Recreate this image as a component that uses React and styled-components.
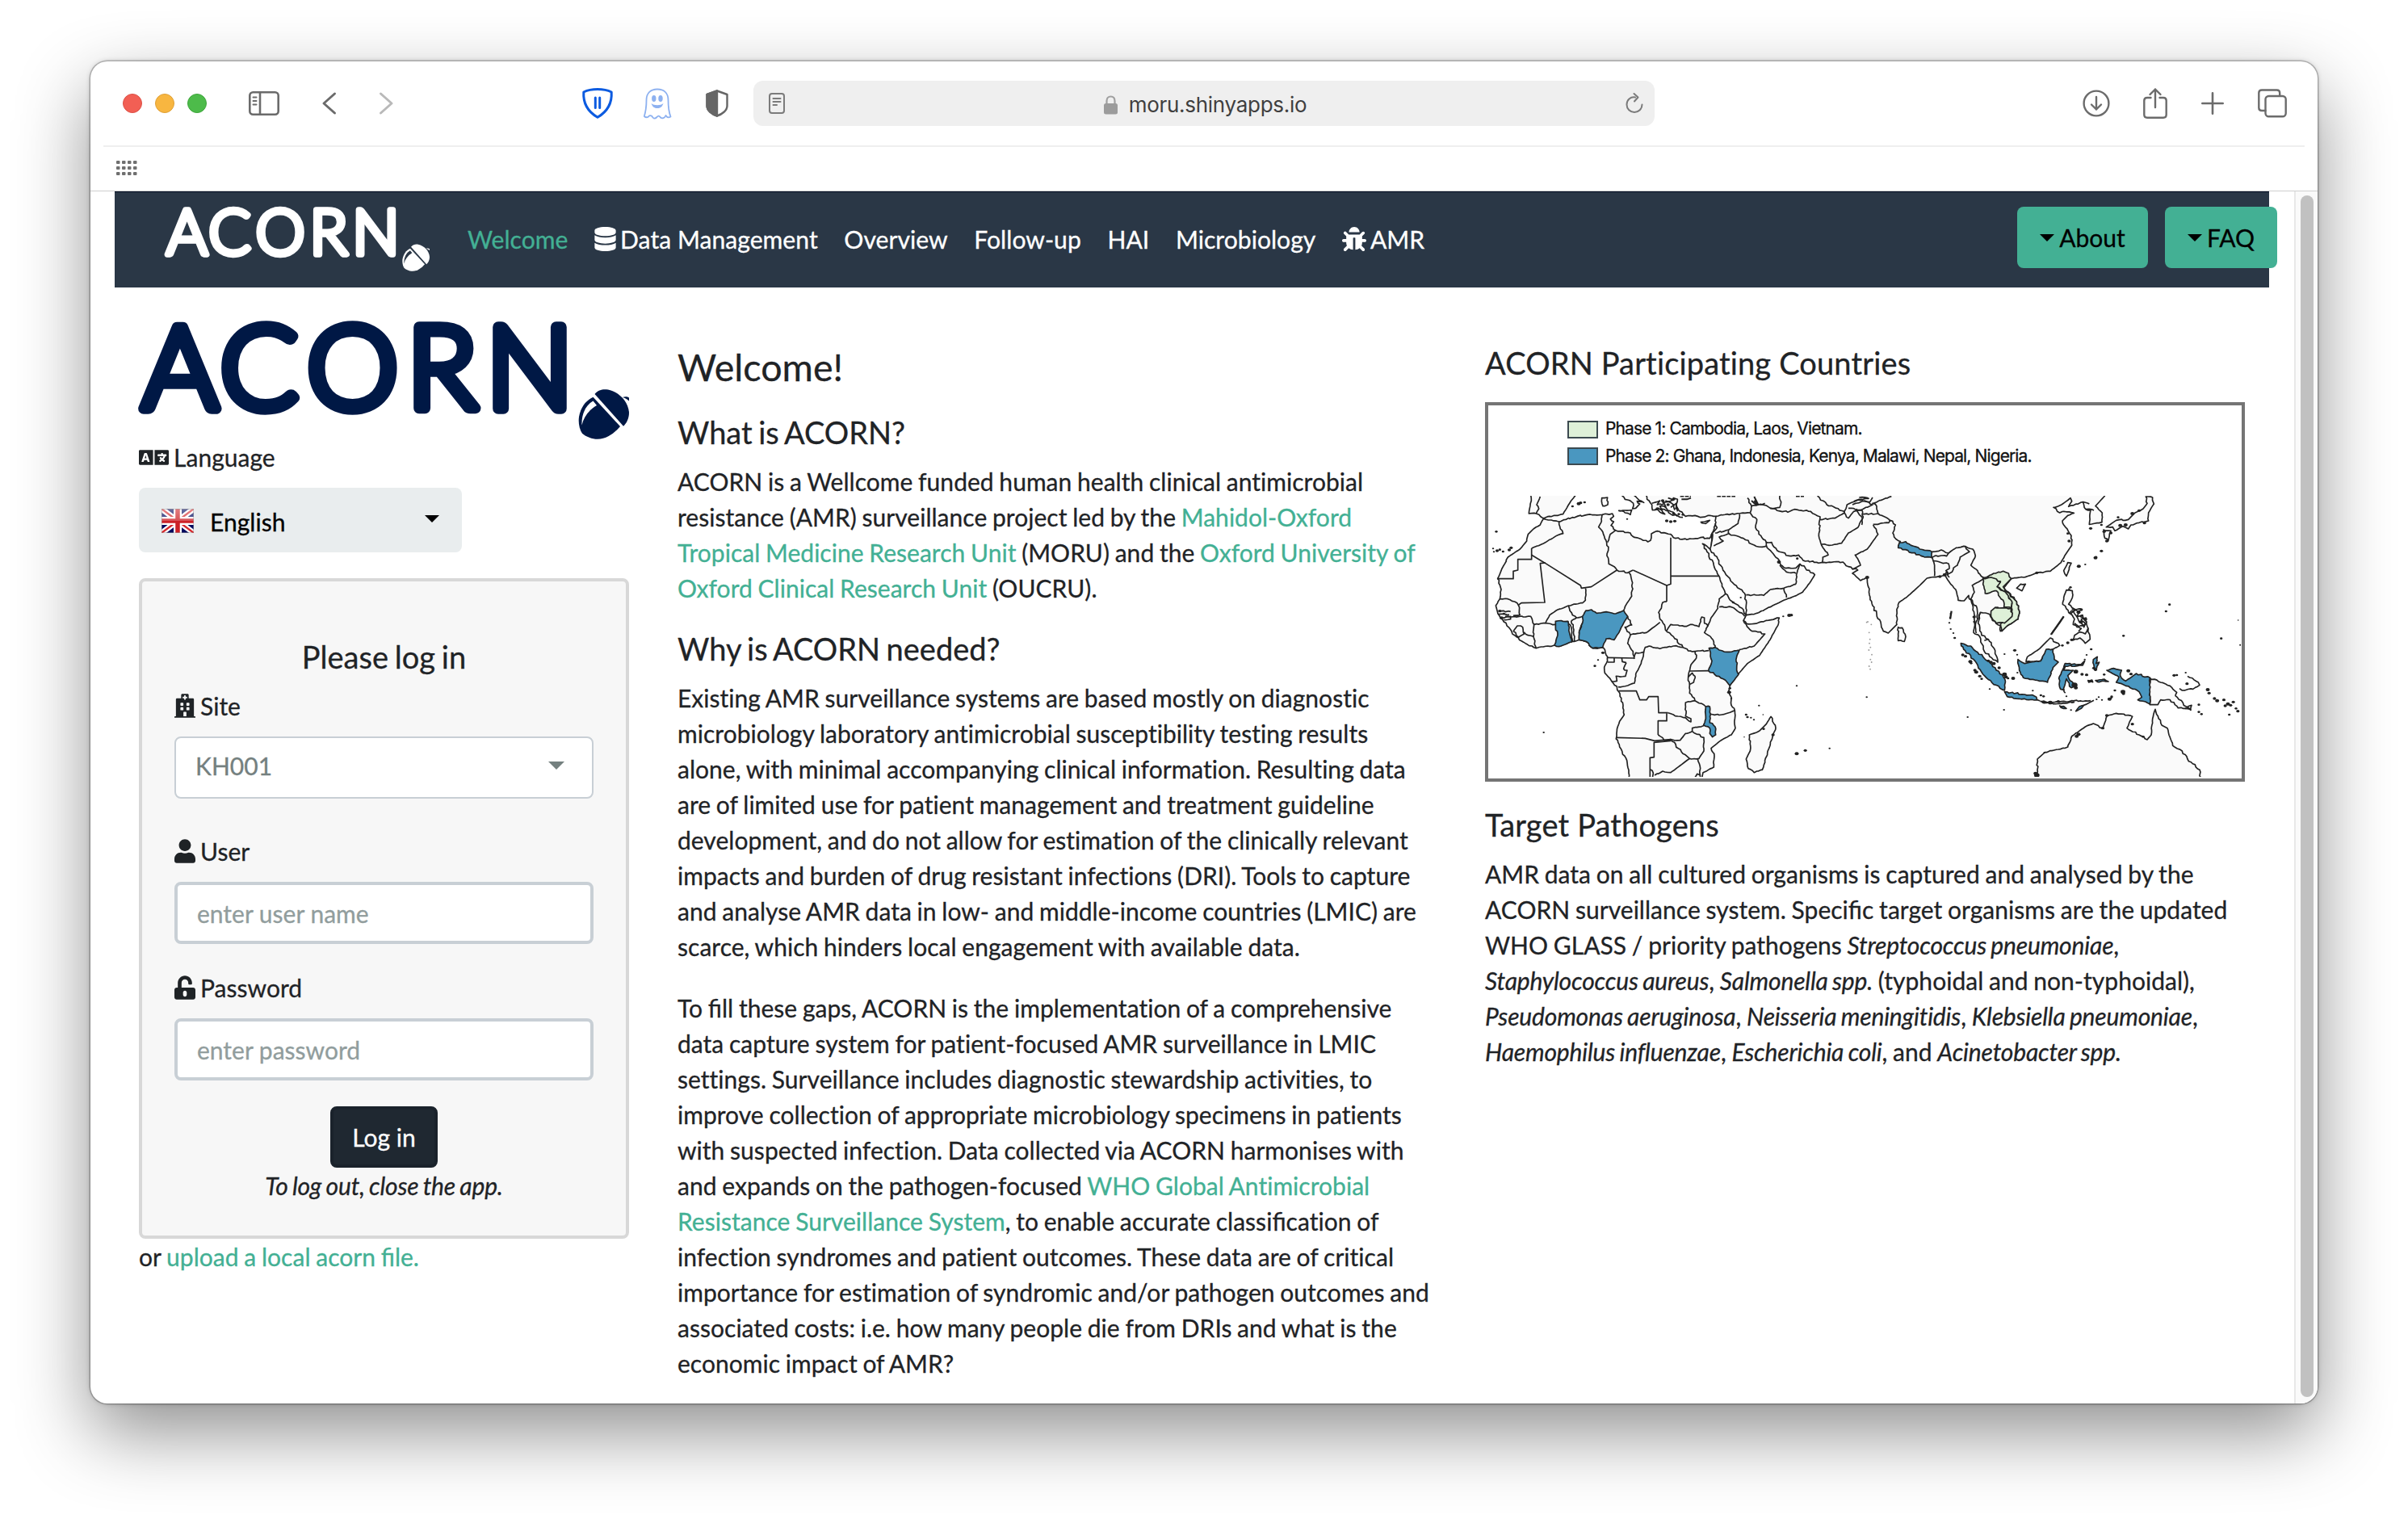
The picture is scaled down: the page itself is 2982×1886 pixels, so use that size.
import React from "react";
import styled, { createGlobalStyle } from "styled-components";
import { FaDatabase, FaBug, FaLanguage, FaHospital, FaUser, FaUnlockAlt } from "react-icons/fa";

const ink = "#1f2326";
const green = "#43b094";
const navy = "#2a3746";
const logoBlue = "#001845";
const chromeGrey = "#6b6b6b";

const Global = createGlobalStyle`
  *, *::before, *::after { box-sizing: border-box; }
  body { margin: 0; background: #fff; }
`;

const Desktop = styled.div`
  width: 2982px;
  height: 1886px;
  padding: 76px 112px 0;
  overflow: hidden;
  background: #fff;
  font-family: Lato, "Liberation Sans", sans-serif;
  font-size: 30px;
  line-height: 44px;
  color: ${ink};
`;

const Window = styled.div`
  width: 2758px;
  height: 1662px;
  display: flex;
  flex-direction: column;
  border-radius: 21px;
  overflow: hidden;
  background: #fff;
  box-shadow: 0 0 0 1.5px rgba(0, 0, 0, 0.22), 0 0 6px rgba(0, 0, 0, 0.2), 0 36px 90px rgba(0, 0, 0, 0.44);
`;

/* ---------- browser chrome ---------- */

const Toolbar = styled.div`
  height: 106px;
  margin: 0 16px;
  padding: 0 22px 0 24px;
  display: flex;
  align-items: center;
  border-bottom: 2px solid #efefef;
  svg { display: block; flex: none; overflow: visible; }
`;

const Lights = styled.div`
  display: flex;
  gap: 16px;
`;

const Light = styled.span`
  width: 24px;
  height: 24px;
  border-radius: 50%;
  background: ${(p) => p.$fill};
  border: 1px solid ${(p) => p.$edge};
`;

const Spacer = styled.span`
  flex: none;
  width: ${(p) => p.$w}px;
`;

const AddressBar = styled.div`
  width: 1116px;
  height: 56px;
  padding: 0 14px 0 19px;
  display: flex;
  align-items: center;
  justify-content: space-between;
  border-radius: 12px;
  background: #efefef;
`;

const Address = styled.span`
  display: flex;
  align-items: center;
  gap: 14px;
  padding-top: 4px;
  font: 400 26px/32px Inter, "Liberation Sans", sans-serif;
  letter-spacing: -0.28px;
  color: #3f3f3f;
`;

const RightTools = styled.div`
  margin-left: auto;
  display: flex;
  align-items: center;
`;

const Favorites = styled.div`
  height: 55px;
  padding: 0 0 2px 32px;
  display: flex;
  align-items: center;
  border-bottom: 1px solid #cfcfcf;
`;

/* ---------- page ---------- */

const Viewport = styled.div`
  flex: 1;
  min-height: 0;
  display: flex;
`;

const Page = styled.div`
  width: 2729px;
  padding-left: 30px;
  font-variant-ligatures: none;
  word-spacing: -1px;
  letter-spacing: 0.03px;
  -webkit-text-stroke: 0.3px currentColor;
`;

const ScrollTrack = styled.div`
  width: 29px;
  padding: 5px 0 0 6px;
  border-left: 2px solid #e8e8e8;
  background: #fafafa;
`;

const Thumb = styled.div`
  width: 16px;
  height: 1488px;
  border-radius: 8px;
  background: #c1c1c1;
`;

const Navbar = styled.nav`
  width: 2668px;
  height: 119px;
  padding: 18px 0 0 62px;
  display: flex;
  align-items: flex-start;
  background: ${navy};
  border-top: 1px solid #000b20;
  svg { display: block; }
`;

const NavList = styled.div`
  display: flex;
  gap: 32.6px;
  margin: 18px 0 0 47px;
  font-size: 30.1px;
  word-spacing: 0;
`;

const NavItem = styled.a`
  display: flex;
  align-items: center;
  gap: 5px;
  white-space: nowrap;
  color: ${(p) => (p.$active ? green : "#fff")};
`;

const NavButtons = styled.div`
  display: flex;
  gap: 21px;
  margin: 0 -10px 0 auto;
`;

const MenuButton = styled.button`
  height: 76px;
  width: ${(p) => p.$w}px;
  padding: 0;
  display: flex;
  align-items: center;
  justify-content: center;
  gap: 6px;
  border: 0;
  border-radius: 8px;
  background: ${green};
  color: #000;
  font: inherit;
`;

const Caret = styled.span`
  flex: none;
  width: 0;
  height: 0;
  border: ${(p) => p.$s || 9.5}px solid transparent;
  border-top-color: ${(p) => p.$color || "#000"};
  border-bottom: 0;
`;

const Columns = styled.div`
  display: grid;
  grid-template-columns: 607px 940px 941px;
  column-gap: 60px;
  padding-left: 30px;
`;

const Side = styled.aside`
  padding-top: 40px;
  > svg { display: block; }
`;

const Label = styled.div`
  height: 44px;
  display: flex;
  align-items: center;
  gap: 6px;
  margin-bottom: 16px;
`;

const LanguageSelect = styled.div`
  width: 400px;
  height: 80px;
  margin-bottom: 32px;
  padding: 1px 28px 0 28px;
  display: flex;
  align-items: center;
  border-radius: 8px;
  background: #e9edee;
  color: #000;
  > span:nth-child(2) { flex: 1; margin-left: 20px; padding-top: 3px; }
  > span:last-child { margin-top: -4px; }
`;

const LoginPanel = styled.section`
  height: 818px;
  padding: 71px 40px 0;
  border: 4px solid #d8d8d8;
  border-radius: 8px;
  background: #f7f7f7;
`;

const LoginTitle = styled.h4`
  margin: 0 0 17px;
  font-weight: 400;
  font-size: 38px;
  line-height: 44px;
  text-align: center;
  word-spacing: -2px;
`;

const SiteSelect = styled.div`
  height: 77px;
  margin-bottom: 43px;
  padding: 0 34px 6px 24px;
  display: flex;
  align-items: center;
  justify-content: space-between;
  border: 2px solid #c8cfd5;
  border-radius: 8px;
  background: #fff;
  color: #74807f;
`;

const Input = styled.input`
  display: block;
  width: 100%;
  height: 77px;
  margin: 0 0 32px;
  padding: 0 24px;
  border: 4px solid #c8cfd5;
  border-radius: 8px;
  background: #fff;
  font: inherit;
  &::placeholder { color: #919d9d; opacity: 1; }
`;

const LoginButton = styled.button`
  display: block;
  width: 133px;
  height: 76px;
  margin: 0 auto;
  padding: 0;
  border: 4px solid #1a222b;
  border-radius: 8px;
  background: #1f2831;
  color: #fff;
  font: inherit;
`;

const Italic = styled.em`
  letter-spacing: -0.17px;
  word-spacing: -1.5px;
`;

const LogoutHint = styled.div`
  text-align: center;
`;

const Link = styled.a`
  color: ${green};
`;

const Joined = styled.span`
  font-variant-ligatures: common-ligatures;
  letter-spacing: 0;
`;

const Article = styled.main`
  padding-top: 70px;
  white-space: nowrap;
`;

const PageTitle = styled.h2`
  margin: 0 0 31px;
  font-weight: 400;
  font-size: 46.6px;
  line-height: 56px;
`;

const Heading = styled.h3`
  margin: 0 0 ${(p) => p.$mb || 17}px;
  font-weight: 400;
  font-size: 38px;
  line-height: 44px;
  white-space: nowrap;
  letter-spacing: ${(p) => (p.$wide ? 0.15 : 0)}px;
  word-spacing: ${(p) => (p.$wide ? 0 : -2.2)}px;
`;

const Para = styled.p`
  margin: 0 0 ${(p) => p.$mb || 32}px;
`;

const Aside = styled.section`
  padding-top: 71px;
  white-space: nowrap;
`;

const MapFrame = styled.figure`
  width: 941px;
  height: 470px;
  margin: 0 0 31px;
  border: 4px solid #757575;
  background: #fff;
  display: flex;
  flex-direction: column;
  > svg { display: block; }
`;

const Legend = styled.figcaption`
  height: 106px;
  padding: 12px 0 0 98px;
  display: flex;
  flex-direction: column;
`;

const LegendRow = styled.div`
  display: flex;
  align-items: center;
  gap: 9px;
  height: 33.5px;
  font: 400 21px/33px Inter, "Liberation Sans", sans-serif;
  letter-spacing: -0.88px;
  word-spacing: 0;
  color: #111;
`;

const Swatch = styled.span`
  width: 38px;
  height: 22px;
  margin-top: 2px;
  border: 2px solid #3c4a50;
  background: ${(p) => p.$fill};
`;

/* ---------- drawings ---------- */

const LogoSvg = styled.svg`
  overflow: visible;
  letter-spacing: 0;
`;

function Logo({ width, color, back }) {
  return (
    <LogoSvg width={width} height={(width * 148) / 607} viewBox="172 396 607 148" role="img" aria-label="ACORN">
      <g fill={color} stroke={color} strokeWidth="13.5" strokeLinejoin="round" fontFamily="Lato, sans-serif" fontWeight="300" fontSize="143">
        <text x="176 272.5 380 504 602" y="505.500">ACORN</text>
      </g>
      <g fill={color}>
        <path d="M736.5 488C741 482.5 747 481.5 753 482.500C766 485 778 497 779 511C779 518 776 524 772 527.700Z" />
        <path d="M734.500 491.700L768 528C761 536 752 543.700 740 543.700C733 543.700 726 541 721 536.700C717.500 532 716 524 717 516C719 505 725 496 734.500 491.700Z" />
        <path d="M771 492C774 490.800 777 491 779 492.500V496.500C776.500 494 774 493 771 492Z" />
      </g>
      <path d="M734.500 496.500L739 502C729 508 723 516 720.500 526.500C720 513 725 502 734.500 496.500Z" fill={back} />
    </LogoSvg>
  );
}

function Flag() {
  return (
    <svg width="40" height="30" viewBox="0 0 40 30">
      <defs>
        <linearGradient id="gloss" x1="0" y1="0" x2="0" y2="1">
          <stop offset="0" stopColor="#fff" stopOpacity=".42" />
          <stop offset=".5" stopColor="#fff" stopOpacity=".22" />
          <stop offset=".5" stopColor="#fff" stopOpacity="0" />
        </linearGradient>
      </defs>
      <path d="M0 0H40V30H0Z" fill="#00085e" />
      <path d="M0 0L40 30M40 0L0 30" stroke="#fff" strokeWidth="7" />
      <path d="M0 0L40 30M40 0L0 30" stroke="#d42a2e" strokeWidth="2.400" />
      <path d="M20 0V30M0 15H40" stroke="#fff" strokeWidth="10" />
      <path d="M20 0V30M0 15H40" stroke="#cc2127" strokeWidth="5.500" />
      <path d="M0 0H40V30H0Z" fill="url(#gloss)" />
      <path d="M.5 .5H39.500V29.500H.5Z" fill="none" stroke="#999" strokeOpacity=".5" />
    </svg>
  );
}

const land = {
  africa: "217,127 235,132 275,138 325,122 380,112 435,112 473,108 478,118 466,128 478,138 468,152 485,170 540,180 548,192 605,213 615,208 618,183 640,173 690,185 700,197 750,205 800,197 835,200 845,178 838,242 808,220 825,250 850,300 868,338 885,385 905,420 925,440 960,465 970,485 960,505 972,517 1000,517 1045,505 1093,495 1090,518 1060,575 1020,635 975,665 940,705 910,745 905,770 915,790 915,820 928,840 930,905 915,930 870,955 840,980 852,1010 850,1050 810,1070 805,1100 538,1100 527,1025 500,975 487,945 490,915 500,880 517,855 513,820 497,770 490,750 470,730 445,700 443,680 455,655 455,640 440,607 400,608 385,590 350,577 325,583 275,600 258,597 190,608 150,590 110,560 70,510 48,480 40,450 55,425 60,390 47,350 60,320 85,270 130,240 155,210 160,185 180,165 205,150",
  madagascar: "1062,862 1080,905 1070,930 1055,980 1030,1060 1000,1070 978,1055 970,1020 985,990 982,930 1020,915 1045,890",
  iberia: "170,30 172,60 163,108 190,108 215,125 240,118 290,110 305,85 320,60 345,30",
  sardinia: "434,50 455,48 456,75 438,80",
  italy: "500,30 520,55 545,65 552,78 548,90 560,88 575,72 565,62 590,67 560,45 550,30",
  sicily: "497,97 520,96 545,95 540,112 520,105",
  greece: "598,30 602,55 620,75 622,95 640,92 650,103 668,110 655,92 650,80 672,84 660,65 690,62 700,50 715,55 712,80 722,98 745,118 780,115 800,122 835,115 858,118 855,150 845,180 838,245 850,255 875,300 895,335 920,365 965,405 970,450 972,485 1010,478 1060,455 1110,430 1150,415 1180,400 1210,360 1225,335 1190,310 1170,295 1155,310 1110,308 1098,298 1088,275 1060,245 1045,228 1045,215 1065,215 1085,245 1130,265 1165,262 1190,285 1250,290 1330,288 1350,305 1385,318 1365,330 1395,357 1418,345 1424,380 1428,410 1440,450 1455,480 1480,545 1498,552 1530,520 1530,470 1538,438 1565,420 1615,375 1642,348 1710,338 1730,370 1752,400 1758,430 1780,432 1797,412 1808,440 1820,490 1815,550 1838,565 1855,620 1905,660 1892,610 1870,575 1845,560 1832,515 1840,475 1875,482 1885,505 1915,525 1915,545 1940,525 1980,500 1985,470 1975,435 1945,400 1928,383 1955,350 2000,345 2045,330 2100,322 2140,290 2160,255 2180,225 2178,190 2150,150 2145,135 2165,115 2188,106 2150,100 2135,105 2112,85 2140,76 2160,62 2175,50 2180,62 2168,82 2222,65 2232,92 2250,95 2245,148 2292,140 2293,105 2268,80 2300,45 2310,30",
  srilanka: "1535,530 1550,532 1563,565 1558,583 1535,580",
  hainan: "1975,385 1990,370 2008,370 1995,395",
  taiwan: "2150,320 2165,290 2178,292 2160,340",
  japan: "2455,45 2480,48 2485,72 2465,105 2465,135 2430,142 2400,150 2390,165 2370,155 2340,172 2332,158 2308,158 2345,133 2390,130 2415,105 2445,90 2460,70",
  kyushu: "2298,168 2325,172 2315,210 2300,190",
  luzon: "2160,392 2182,395 2182,420 2168,445 2195,465 2175,480 2160,462 2146,445 2150,420",
  mindanao: "2210,548 2230,555 2240,535 2248,575 2230,590 2210,570 2185,578 2190,560",
  sabah: "2010,658 2015,640 2060,610 2100,570 2135,598 2110,612 2085,620 2065,655",
  png: "2470,718 2510,735 2545,748 2570,772 2565,785 2605,825 2620,835 2575,830 2545,800 2510,800 2500,818 2470,818",
  australia: "2045,1100 2052,1060 2052,1020 2080,995 2165,975 2180,935 2230,900 2260,888 2295,905 2310,860 2345,850 2405,862 2385,905 2430,930 2460,948 2475,930 2480,870 2490,835 2500,860 2515,895 2535,905 2555,970 2590,990 2610,1020 2655,1060 2658,1100",
};

const phaseTwo = [
  "362,490 375,468 395,465 415,478 450,473 480,480 515,468 530,490 515,515 500,545 480,577 450,573 437,605 400,608 385,590 350,577 350,545 362,515",
  "262,508 308,508 313,530 316,560 322,585 275,602 258,597 270,555 262,530",
  "832,608 855,605 870,615 900,622 945,615 935,640 935,690 942,705 910,747 885,722 830,692 843,655",
  "820,825 835,825 838,853 835,885 855,900 857,930 845,938 835,925 835,905 812,893 820,870",
  "1540,215 1563,212 1615,240 1660,250 1660,272 1620,265 1535,235",
  "1768,590 1805,600 1850,640 1895,680 1932,725 1930,765 1890,743 1850,705 1820,655 1778,612",
  "1930,770 2005,780 2040,785 2060,803 2020,800 1940,788",
  "1980,650 2005,665 2065,655 2085,612 2110,612 2115,650 2130,660 2110,680 2090,735 2060,730 2000,718 1985,690",
  "2145,690 2155,665 2215,668 2228,655 2220,672 2155,675 2150,690 2185,690 2165,710 2190,750 2178,755 2160,722 2150,763 2138,760 2132,720",
  "2310,690 2335,683 2365,690 2360,710 2380,730 2420,702 2470,718 2470,815 2425,800 2440,790 2430,770 2365,740 2345,735 2355,715",
  "2260,650 2275,640 2270,665 2282,660 2268,690 2262,670",
  "2240,728 2255,726 2258,734 2243,735",
  "2268,728 2300,723 2316,732 2300,730 2275,733",
  "2135,822 2150,824 2160,832 2148,832",
  "2195,842 2208,825 2225,820 2215,832",
];

const phaseOne = [
  "1868,342 1890,330 1925,322 1945,330 1955,350 1925,380 1940,400 1975,435 1985,470 1980,500 1940,525 1920,545 1915,518 1955,490 1958,440 1925,395 1900,380 1915,360 1880,350",
  "1850,350 1880,345 1915,362 1902,380 1925,395 1958,435 1955,458 1928,455 1925,430 1900,395 1858,405 1850,370",
  "1880,470 1895,457 1955,460 1958,490 1930,515 1900,515 1880,490",
];

const borders = [
  "205,45 192,75 200,90 190,108",
  "275,138 280,165 290,182 270,188 245,203 210,222 173,237",
  "55,425 85,425 110,435 125,450 130,485 105,487",
  "435,112 433,135 422,158 440,185 452,215 458,245 453,265 460,295 480,305 490,318 530,328 550,318",
  "485,170 465,185 455,215",
  "675,435 660,438 655,460 645,475 650,500 662,516 670,540 700,565 735,605",
  "535,328 548,365 545,415 525,445 515,468",
  "373,385 373,430 362,440 310,450 270,465 240,485 225,515 262,520",
  "310,450 325,485 340,495 320,507",
  "340,495 362,490",
  "75,490 170,490 182,520 180,565 190,608",
  "182,520 225,515",
  "105,545 120,525 140,530 145,555 125,567 105,545",
  "145,548 160,560 180,565",
  "50,470 95,472", "50,482 90,484", "55,497 95,490 95,500 70,502",
  "320,507 330,540 332,583", "362,515 352,540 350,577", "308,508 322,540 325,583",
  "530,490 545,522 520,530 540,558 530,590 550,620 555,648",
  "540,558 600,550 650,512",
  "555,640 560,625 590,622 595,605 610,600 650,610 700,600 735,605 755,618 780,620",
  "590,622 580,665 560,705 555,738 530,747 495,752",
  "525,662 515,685 528,690 522,712 487,712 490,730 470,732",
  "675,543 690,520 740,527 770,520 795,528 805,492 815,495 815,515 828,525 840,495 865,460 870,425 895,405",
  "828,525 815,550 830,560 850,585 855,608",
  "780,620 800,618 832,617",
  "870,455 915,455 945,475 965,490",
  "960,505 985,540 1040,555 1000,600 945,613",
  "780,620 785,645 765,670 757,700 755,715 760,745 760,775 780,803 820,825",
  "755,715 770,700 780,712 775,735 762,742",
  "838,853 880,855 928,840",
  "780,803 745,810 745,860 765,870 765,882 735,865 700,855 680,848",
  "643,930 665,950 690,947 725,950 745,925 770,917",
  "690,947 735,1000 760,1018 795,1018 813,990 813,940 770,917 770,905 815,895",
  "630,1080 660,1065 690,1070 760,1018",
  "790,1018 800,1055 800,1090",
  "613,1058 625,1072 622,1090", "780,1088 788,1075 800,1080",
  "858,118 900,110 985,105 1010,130 1005,160 1025,190 1045,215",
  "855,180 905,168 940,145 945,110",
  "905,168 907,183 960,200 1000,225 1030,232 1048,228",
  "850,228 885,210 870,195 905,182",
  "855,145 862,160 848,178",
  "1110,385 1120,420", "970,410 1035,412 1060,390 1110,385 1155,370",
  "1095,300 1120,325 1155,330", "1170,295 1160,325 1155,370",
  "975,50 990,80 985,105", "990,80 1040,70", "1020,75 1045,78 1060,88 1095,85 1100,65 1095,42",
  "1060,88 1125,103 1150,92 1210,100 1245,120 1240,190 1250,225 1275,262 1255,270 1253,290",
  "1245,130 1300,125 1335,105 1350,125 1370,100 1400,95 1405,120 1385,160 1350,180 1325,218 1290,225 1250,222",
  "1235,42 1270,75 1335,100",
  "1335,105 1345,75 1390,55 1430,65 1440,48", "1350,88 1395,95 1440,75 1410,60 1365,75", "1390,48 1425,52 1370,62",
  "1442,150 1460,185 1420,240 1375,262 1395,300 1365,315",
  "1442,148 1500,142 1505,133 1525,150 1515,180 1520,195 1545,212",
  "1400,110 1460,108 1455,80 1440,70 1480,55 1510,44",
  "1460,108 1485,120 1505,135", "1400,150 1402,125 1380,90",
  "1660,250 1680,248 1695,243 1722,255 1715,266 1675,264 1660,272",
  "1662,272 1670,300 1670,340", "1665,284 1722,294 1725,312 1712,320 1725,345",
  "1722,255 1750,235 1785,230 1800,250 1765,270 1755,300 1740,310 1735,325 1715,335",
  "1785,230 1812,240 1822,265 1805,300 1830,320 1850,345 1850,352 1810,375 1818,400 1805,425 1828,460 1830,500",
  "1850,345 1870,342", "1930,460 1895,457", "1840,478 1822,520 1825,552", "1855,580 1870,575",
  "2222,65 2245,72", "2232,92 2262,96",
  "2610,712 2650,735 2655,745 2630,760 2590,765 2580,758", "2610,825 2625,820 2622,838 2600,832",
  "670,60 700,75 705,95", "650,90 690,100 715,118", "690,85 710,70 715,100", "680,50 700,60", "665,80 690,110 735,122",
  "620,70 650,60 640,75 665,72", "630,95 645,88 660,95",
  "800,140 835,133 820,145 803,142",
  "2062,805 2100,812 2150,805 2250,803", "2075,812 2140,814 2190,808", "2225,820 2250,808 2262,802",
  "2175,480 2190,500 2185,520 2200,530 2230,520 2215,500 2235,495", "2180,462 2210,470 2200,490 2220,485 2235,520 2240,545", "2185,470 2205,505 2225,530 2235,510 2210,490", "2190,515 2215,535 2205,545",
  "2150,490 2130,520 2102,558",
  "2170,480 2178,470 2215,462", "2150,760 2156,775",
];

const straightBorders = [
  "173,237 173,278 122,278 122,318 105,322 105,350 45,350",
  "173,262 220,290 355,375 358,385 395,380 490,318",
  "225,291 205,293 222,438 135,440 125,447",
  "550,318 675,375 690,370 690,197",
  "690,340 870,340",
  "675,375 675,435",
  "455,643 555,645", "455,660 480,660 480,643", "508,643 510,658 525,662",
  "760,693 830,692",
  "680,848 645,848 643,788 608,788 600,800 575,800 562,767 497,767",
  "675,850 675,878 643,878 643,930",
  "487,940 595,943 630,952 690,947",
  "690,952 628,958 628,1013 613,1015 613,1090",
];

const blobs = [
  "42,175,4", "30,238,3", "33,250,3", "45,246,5", "55,242,4", "67,249,4", "90,243,5", "97,235,5", "325,81,4", "348,71,6", "355,68,5", "370,66,4",
  "528,128,3", "408,674,4", "420,652,3", "438,625,5", "218,921,3", "1108,490,3", "1130,486,6", "1138,485,5", "675,135,5", "690,138,5", "705,136,5", "735,112,4",
  "700,55,5", "660,60,5", "680,75,5", "712,88,5", "700,108,4", "720,110,4", "640,90,5",
  "1158,748,3", "1018,821,3", "970,855,4", "975,864,4", "988,866,3", "999,874,3", "1033,855,2", "963,938,2", "1158,1000,6", "1190,988,5", "1280,980,3", "1418,790,3",
  "910,757,4", "907,772,6", "915,795,3", "1070,930,5", "1035,908,4",
  "1730,480,3", "1728,495,3", "1725,514,3", "1730,537,3", "1740,552,3", "1745,570,4", "1793,864,3", "1928,837,3", "1875,760,3", "2035,766,3", "1930,630,3", "1968,616,5", "1977,632,3",
  "1775,633,5", "1785,638,5", "1803,658,6", "1806,664,4", "1820,690,5", "1825,697,6", "1838,712,5", "1845,722,4", "1910,681,5", "1890,665,6", "1880,660,5", "1870,655,5", "1930,705,7", "1935,715,6", "1943,720,4", "1962,720,6", "1978,699,3",
  "2206,304,6", "2230,297,3", "2268,272,6", "2290,247,5", "2310,210,5", "2250,163,5", "2290,150,4", "2352,122,4", "2405,108,6", "2430,97,5", "2175,382,4", "2170,388,3", "2530,471,4", "2543,446,4", "2372,562,4", "2735,572,4", "2806,596,3", "2798,504,2",
  "2195,695,7", "2190,745,9", "2195,755,6", "2218,705,5", "2235,707,5", "2268,688,5", "2262,682,5", "2300,706,4", "2390,692,6", "2400,704,5", "2340,765,4", "2370,770,7", "2372,777,5", "2320,797,6", "2292,800,3", "2272,798,3", "2280,790,3", "2328,788,4", "2075,808,6", "2100,810,7", "2130,806,5", "2075,787,4", "2065,783,4", "2177,838,3", "2160,787,3",
  "2145,598,4", "2165,588,5", "2252,612,4", "2235,633,3", "2228,650,3", "2180,577,5",
  "2560,709,5", "2570,708,4", "2603,699,3", "2690,775,5", "2685,762,6", "2710,795,5", "2720,803,6", "2745,800,5", "2760,815,6", "2750,822,5", "2770,820,5", "2780,808,5", "2797,842,5", "2790,832,4", "2652,818,4", "2652,845,4", "2662,853,4", "2765,855,4", "2608,740,5", "2050,1080,8", "2045,1073,6",
  "2205,928,6", "2198,935,6", "2295,905,5", "2310,858,5", "2445,937,4", "2405,890,5", "2078,996,3", "1690,342,5", "1708,335,6", "1715,328,4", "2050,328,5", "2170,210,5", "2165,182,4", "2150,285,3", "1817,492,5", "1818,510,4",
  "55,470,5", "62,495,5", "70,480,4", "1160,275,4", "1092,288,6", "922,438,4", "950,420,3", "1420,345,6", "2300,175,5", "2325,180,5", "2360,152,6", "2380,150,6", "2450,143,5", "2215,510,6", "2205,475,6", "2230,500,6", "2215,465,5",
];

const maldives = [[1422, 510], [1418, 512], [1435, 520], [1427, 550], [1430, 575], [1428, 590], [1432, 605], [1426, 615], [1437, 632], [1432, 650], [1436, 660], [1427, 675], [1431, 686]];

/* Splits each leg of a coastline into short steps with a small fixed wobble. */
function coast(points, closed = true) {
  const pts = points.split(" ").map((p) => p.split(",").map(Number));
  if (closed) pts.push(pts[0]);
  let d = `M${pts[0][0]} ${pts[0][1]}`;
  for (let i = 1; i < pts.length; i += 1) {
    const [ax, ay] = pts[i - 1];
    const [bx, by] = pts[i];
    const steps = Math.max(1, Math.round(Math.hypot(bx - ax, by - ay) / 9));
    for (let s = 1; s <= steps; s += 1) {
      const x = ax + ((bx - ax) * s) / steps;
      const y = ay + ((by - ay) * s) / steps;
      const k = s === steps ? 0 : 2.6;
      const wobble = Math.sin(x * 12.9898 + y * 78.233) * 43758.5453;
      const r = (wobble - Math.floor(wobble)) * 2 - 1;
      d += `L${(x + r * k).toFixed(1)} ${(y - r * k).toFixed(1)}`;
    }
  }
  return closed ? `${d}Z` : d;
}

function CountriesMap() {
  return (
    <svg width="932" height="356" viewBox="12 24 2796 1068">
      <clipPath id="extent">
        <path d="M12 42H2808V1086H12Z" />
      </clipPath>
      <g clipPath="url(#extent)" stroke="#222" strokeWidth="5" strokeLinejoin="round" fill="#fafafa">
        {Object.keys(land).map((k) => (
          <path key={k} d={coast(land[k])} />
        ))}
        <g fill="none">
          {borders.map((b) => (
            <path key={b} d={coast(b, false)} />
          ))}
          {straightBorders.map((b) => (
            <polyline key={b} points={b} />
          ))}
          <path d="M725 44H765M862 44H930M1155 44H1185" strokeDasharray="14 4" />
          <path d="M730 55H750L765 50M1000 45L1015 75L1000 60M990 60L1010 78" strokeWidth="6" />
        </g>
        <g fill="#4a97c0">
          {phaseTwo.map((b) => (
            <path key={b} d={coast(b)} />
          ))}
        </g>
        <g fill="#def0d8">
          {phaseOne.map((b) => (
            <path key={b} d={coast(b)} />
          ))}
        </g>
        <path d="M1733 470L1728 500M2150 490L2104 556M2268 275L2272 266M2320 800L2330 788" strokeWidth="7" />
        <g stroke="none" fill="#222">
          {blobs.map((b) => {
            const [x, y, r] = b.split(",").map(Number);
            return <ellipse key={b} cx={x} cy={y} rx={r * 1.25} ry={r} />;
          })}
          {maldives.map(([x, y]) => (
            <circle key={`${x}-${y}`} cx={x} cy={y} r="2.800" fill="#999" />
          ))}
        </g>
      </g>
    </svg>
  );
}

function ChromeIcon({ w, h, sw = 2.6, color = chromeGrey, children }) {
  return (
    <svg width={w} height={h} viewBox={`0 0 ${w} ${h}`} fill="none" stroke={color} strokeWidth={sw} strokeLinecap="round" strokeLinejoin="round">
      {children}
    </svg>
  );
}

function BrowserToolbar() {
  return (
    <Toolbar>
      <Lights>
        <Light $fill="#f25f54" $edge="#dc5046" />
        <Light $fill="#f8b640" $edge="#dfa036" />
        <Light $fill="#4dbb4a" $edge="#3ea53b" />
      </Lights>
      <Spacer $w={52} />
      <ChromeIcon w={38} h={30}>
        <rect x="1.300" y="1.300" width="35.400" height="27.400" rx="4" />
        <path d="M14 1.300V28.700" />
        <path d="M5.500 7.500H9.500M5.500 12H9.500M5.500 16.500H9.500" strokeWidth="2" />
      </ChromeIcon>
      <Spacer $w={53} />
      <ChromeIcon w={17} h={28} sw={3}>
        <path d="M15.500 2L2 14L15.500 26" />
      </ChromeIcon>
      <Spacer $w={54} />
      <ChromeIcon w={17} h={28} sw={3} color="#b9b9b9">
        <path d="M1.500 2L15 14L1.500 26" />
      </ChromeIcon>
      <Spacer $w={234} />
      <ChromeIcon w={38} h={38} color="#0c5be0" sw={3}>
        <path d="M1.800 5C7 2.500 13 1.600 19 1.600S31 2.500 36.200 5C37 17 33 28 19 36.300C5 28 1 17 1.800 5Z" />
        <path d="M16.300 12V24.500M21.700 12V24.500" />
      </ChromeIcon>
      <Spacer $w={38} />
      <ChromeIcon w={34} h={38} color="#8db1f0" sw={1.8}>
        <path d="M3.500 15C3.500 6 9 1.500 17 1.500S30.500 6 30.500 15C30.500 23 31 29 33.500 35.500C31 37 29 36.500 27.500 34C26 37.500 23 38 21 36.500C19.500 34 18 34 16.500 36C14 38.500 11.500 38 10.500 35C8.500 33.500 7 34 6 35.500C4.500 36.500 2.500 36.500 .8 35C3 28 3.500 23 3.500 15Z" />
        <ellipse cx="12.800" cy="13" rx="2.700" ry="4" fill="#8db1f0" stroke="none" />
        <ellipse cx="21" cy="13" rx="2.700" ry="4" fill="#8db1f0" stroke="none" />
        <path d="M9.500 19C13 22 21 22 24.500 19C23 23.500 20.500 25 17 25S11 23.500 9.500 19Z" fill="#8db1f0" stroke="none" />
      </ChromeIcon>
      <Spacer $w={43} />
      <ChromeIcon w={28} h={34} color="#666" sw={2.4}>
        <path d="M14 1.500L26.500 6V20C26.500 26 20 30.500 14 32.500C8 30.500 1.500 26 1.500 20V6Z" />
        <path d="M14 1.500V32.500C8 30.500 1.500 26 1.500 20V6Z" fill="#666" />
      </ChromeIcon>
      <Spacer $w={31} />
      <AddressBar>
        <ChromeIcon w={20} h={26} color="#7b7b7b" sw={2}>
          <rect x="1" y="1" width="18" height="24" rx="3" />
          <path d="M5.500 7H14.500M5.500 11H14.500M5.500 15H10" />
        </ChromeIcon>
        <Address>
          <svg width="17" height="24" viewBox="0 0 17 24">
            <path d="M3.500 11V7C3.500 3.500 5.500 1.500 8.500 1.500S13.500 3.500 13.500 7V11" fill="none" stroke="#a0a0a0" strokeWidth="2.200" />
            <rect x="0" y="10" width="17" height="13.500" rx="2.500" fill="#9c9c9c" />
          </svg>
          moru.shinyapps.io
        </Address>
        <ChromeIcon w={22} h={26} color="#7b7b7b" sw={2}>
          <path d="M12 5.500C6 4.500 1.500 9 1.500 14.500A9.500 9.500 0 0 0 20.500 14.500" />
          <path d="M10.500 1L15.500 5.500L11 10.500" />
        </ChromeIcon>
      </AddressBar>
      <RightTools>
        <ChromeIcon w={34} h={34} sw={2.4}>
          <circle cx="17" cy="17" r="15.400" />
          <path d="M17 9V24.500M11 18.500L17 24.500L23 18.500" />
        </ChromeIcon>
        <Spacer $w={41} />
        <ChromeIcon w={30} h={38} sw={2.4}>
          <path d="M9.500 12H5C2.500 12 1.300 13.200 1.300 15.500V33C1.300 35.500 2.500 36.700 5 36.700H25C27.500 36.700 28.700 35.500 28.700 33V15.500C28.700 13.200 27.500 12 25 12H20.500" />
          <path d="M15 24V1.500M8.500 8L15 1.500L21.500 8" />
        </ChromeIcon>
        <Spacer $w={42} />
        <ChromeIcon w={28} h={28} sw={2.6}>
          <path d="M14 1.300V26.700M1.300 14H26.700" />
        </ChromeIcon>
        <Spacer $w={42} />
        <ChromeIcon w={36} h={36} sw={2.4}>
          <path d="M9.500 27H5C2.500 27 1.300 25.800 1.300 23.500V5C1.300 2.500 2.500 1.500 5 1.500H23.500C26 1.500 27.200 2.500 27.200 5V8" />
          <rect x="9.500" y="9" width="25.200" height="25.200" rx="4" />
        </ChromeIcon>
      </RightTools>
    </Toolbar>
  );
}

export default function App() {
  return (
    <Desktop>
      <Global />
      <Window>
        <BrowserToolbar />
        <Favorites>
          <svg width="26" height="18" viewBox="0 0 26 18" fill="#707070">
            {[0, 7, 14, 21].map((x) => [0, 7, 14].map((y) => <rect key={`${x}-${y}`} x={x} y={y} width="4.500" height="4" rx="1" />))}
          </svg>
        </Favorites>
        <Viewport>
          <Page>
            <Navbar>
              <Logo width={328} color="#fff" back={navy} />
              <NavList>
                <NavItem $active>Welcome</NavItem>
                <NavItem><FaDatabase size={30} style={{ width: 27 }} />Data Management</NavItem>
                <NavItem>Overview</NavItem>
                <NavItem>Follow-up</NavItem>
                <NavItem>HAI</NavItem>
                <NavItem>Microbiology</NavItem>
                <NavItem><FaBug size={30} />AMR</NavItem>
              </NavList>
              <NavButtons>
                <MenuButton $w={162}><Caret />About</MenuButton>
                <MenuButton $w={139}><Caret />FAQ</MenuButton>
              </NavButtons>
            </Navbar>
            <Columns>
              <Side>
                <Logo width={607} color={logoBlue} back="#fff" />
                <Label><FaLanguage size={37} />Language</Label>
                <LanguageSelect>
                  <Flag />
                  <span>English</span>
                  <Caret />
                </LanguageSelect>
                <LoginPanel>
                  <LoginTitle>Please log in</LoginTitle>
                  <Label><FaHospital size={30} style={{ width: 26 }} />Site</Label>
                  <SiteSelect>KH001<Caret $s={10} $color="#74807f" /></SiteSelect>
                  <Label><FaUser size={30} style={{ width: 26 }} />User</Label>
                  <Input placeholder="enter user name" />
                  <Label><FaUnlockAlt size={30} style={{ width: 26 }} />Password</Label>
                  <Input placeholder="enter password" />
                  <LoginButton>Log in</LoginButton>
                  <LogoutHint><Italic>To log out, close the app.</Italic></LogoutHint>
                </LoginPanel>
                <div>or <Link>upload a local acorn <Joined>file.</Joined></Link></div>
              </Side>
              <Article>
                <PageTitle>Welcome!</PageTitle>
                <Heading>What is ACORN?</Heading>
                <Para $mb={31}>
                  ACORN is a Wellcome funded human health clinical antimicrobial<br />
                  resistance (AMR) surveillance project led by the <Link>Mahidol-Oxford<br />
                  Tropical Medicine Research Unit</Link> (MORU) and the <Link>Oxford University of<br />
                  Oxford Clinical Research Unit</Link> (OUCRU).
                </Para>
                <Heading>Why is ACORN needed?</Heading>
                <Para>
                  Existing AMR surveillance systems are based mostly on diagnostic<br />
                  microbiology laboratory antimicrobial susceptibility testing results<br />
                  alone, with minimal accompanying clinical information. Resulting data<br />
                  are of limited use for patient management and treatment guideline<br />
                  development, and do not allow for estimation of the clinically relevant<br />
                  impacts and burden of drug resistant infections (DRI). Tools to capture<br />
                  and analyse AMR data in low- and middle-income countries (LMIC) are<br />
                  scarce, which hinders local engagement with available data.
                </Para>
                <Para>
                  To <Joined>fill</Joined> these gaps, ACORN is the implementation of a comprehensive<br />
                  data capture system for patient-focused AMR surveillance in LMIC<br />
                  settings. Surveillance includes diagnostic stewardship activities, to<br />
                  improve collection of appropriate microbiology specimens in patients<br />
                  with suspected infection. Data collected via ACORN harmonises with<br />
                  and expands on the pathogen-focused <Link>WHO Global Antimicrobial<br />
                  Resistance Surveillance System</Link>, to enable accurate classi<Joined>fi</Joined>cation of<br />
                  infection syndromes and patient outcomes. These data are of critical<br />
                  importance for estimation of syndromic and/or pathogen outcomes and<br />
                  associated costs: i.e. how many people die from DRIs and what is the<br />
                  economic impact of AMR?
                </Para>
              </Article>
              <Aside>
                <Heading $wide $mb={27}>ACORN Participating Countries</Heading>
                <MapFrame>
                  <Legend>
                    <LegendRow><Swatch $fill="#def0d8" />Phase 1: Cambodia, Laos, Vietnam.</LegendRow>
                    <LegendRow><Swatch $fill="#4a97c0" />Phase 2: Ghana, Indonesia, Kenya, Malawi, Nepal, Nigeria.</LegendRow>
                  </Legend>
                  <CountriesMap />
                </MapFrame>
                <Heading $wide>Target Pathogens</Heading>
                <Para>
                  AMR data on all cultured organisms is captured and analysed by the<br />
                  ACORN surveillance system. Speci<Joined>fi</Joined>c target organisms are the updated<br />
                  WHO GLASS / priority pathogens <Italic>Streptococcus pneumoniae</Italic>,<br />
                  <Italic>Staphylococcus aureus</Italic>, <Italic>Salmonella spp.</Italic> (typhoidal and non-typhoidal),<br />
                  <Italic>Pseudomonas aeruginosa</Italic>, <Italic>Neisseria meningitidis</Italic>, <Italic>Klebsiella pneumoniae</Italic>,<br />
                  <Italic>Haemophilus influenzae</Italic>, <Italic>Escherichia coli</Italic>, and <Italic>Acinetobacter spp.</Italic>
                </Para>
              </Aside>
            </Columns>
          </Page>
          <ScrollTrack><Thumb /></ScrollTrack>
        </Viewport>
      </Window>
    </Desktop>
  );
}
